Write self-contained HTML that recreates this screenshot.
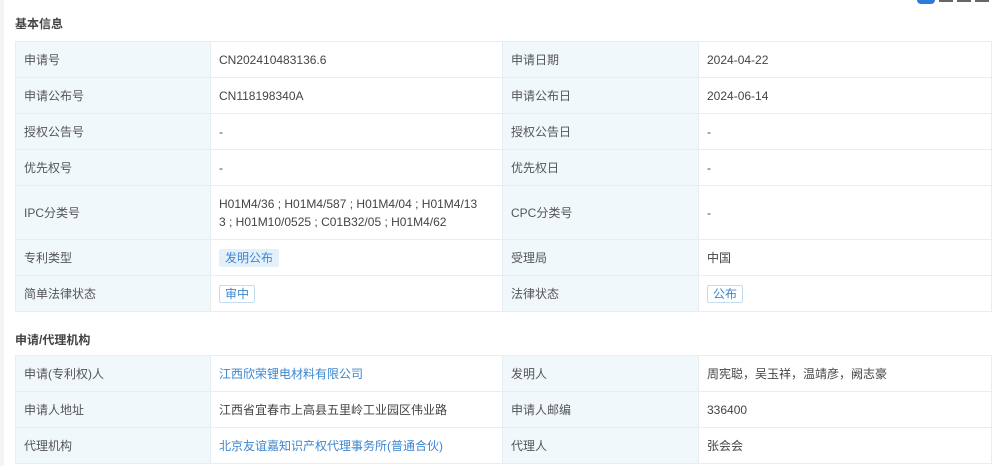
<!DOCTYPE html>
<html><head><meta charset="utf-8"><style>
*{margin:0;padding:0;box-sizing:border-box}
body{width:1000px;height:466px;overflow:hidden;background:#fff;font-family:"Liberation Sans","Noto Sans CJK SC",sans-serif;font-size:12px;color:#444;position:relative}
.h{position:absolute;left:15px;font-weight:bold;font-size:12px;color:#444}
table{position:absolute;left:15px;width:976px;border-collapse:collapse;table-layout:fixed}
td{border:1px solid #e6edf3;padding:0 8px;height:36px;vertical-align:middle;line-height:18px}
td.l{background:#f1f8fc;color:#555}
a{color:#3b86d0;text-decoration:none}
.t1{display:inline-block;background:#e5f1fa;color:#3b86d0;padding:0 6px;line-height:18px;border-radius:2px}
.t2{display:inline-block;border:1px solid #c3dcef;color:#3b86d0;padding:0 5px;line-height:16px;border-radius:2px;background:#fff}
</style></head><body>
<div style="position:absolute;left:0;top:0;width:4px;height:466px;background:#f4f4f4"></div>
<div style="position:absolute;left:917px;top:-6px;width:18px;height:10px;background:#2b7bd9;border-radius:4px"></div>
<div style="position:absolute;left:939px;top:0;width:14px;height:2px;background:#666"></div>
<div style="position:absolute;left:957px;top:0;width:14px;height:2px;background:#666"></div>
<div style="position:absolute;left:975px;top:0;width:14px;height:2px;background:#666"></div>
<div class="h" style="top:15px">基本信息</div>
<table style="top:41px">
<colgroup><col style="width:195px"><col style="width:292px"><col style="width:196px"><col style="width:293px"></colgroup>
<tr><td class="l">申请号</td><td>CN202410483136.6</td><td class="l">申请日期</td><td>2024-04-22</td></tr>
<tr><td class="l">申请公布号</td><td>CN118198340A</td><td class="l">申请公布日</td><td>2024-06-14</td></tr>
<tr><td class="l">授权公告号</td><td>-</td><td class="l">授权公告日</td><td>-</td></tr>
<tr><td class="l">优先权号</td><td>-</td><td class="l">优先权日</td><td>-</td></tr>
<tr><td class="l" style="height:54px">IPC分类号</td><td>H01M4/36 ; H01M4/587 ; H01M4/04 ; H01M4/13<br>3 ; H01M10/0525 ; C01B32/05 ; H01M4/62</td><td class="l">CPC分类号</td><td>-</td></tr>
<tr><td class="l">专利类型</td><td><span class="t1">发明公布</span></td><td class="l">受理局</td><td>中国</td></tr>
<tr><td class="l">简单法律状态</td><td><span class="t2">审中</span></td><td class="l">法律状态</td><td><span class="t2">公布</span></td></tr>
</table>
<div class="h" style="top:331px">申请/代理机构</div>
<table style="top:355px">
<colgroup><col style="width:195px"><col style="width:292px"><col style="width:196px"><col style="width:293px"></colgroup>
<tr><td class="l">申请(专利权)人</td><td><a>江西欣荣锂电材料有限公司</a></td><td class="l">发明人</td><td>周宪聪，吴玉祥，温靖彦，阙志豪</td></tr>
<tr><td class="l">申请人地址</td><td>江西省宜春市上高县五里岭工业园区伟业路</td><td class="l">申请人邮编</td><td>336400</td></tr>
<tr><td class="l">代理机构</td><td><a>北京友谊嘉知识产权代理事务所(普通合伙)</a></td><td class="l">代理人</td><td>张会会</td></tr>
</table>
</body></html>
